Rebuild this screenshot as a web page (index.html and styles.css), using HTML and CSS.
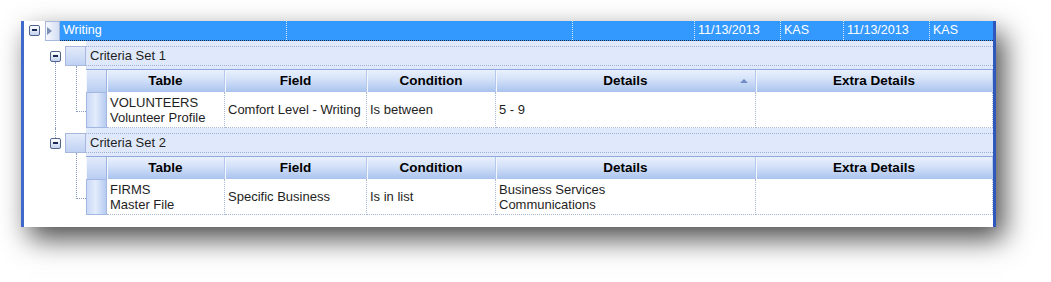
FILE: index.html
```html
<!DOCTYPE html>
<html>
<head>
    <link rel="stylesheet" href="styles.css">
</head>
<body>
    <div class="panel">

        <div class="top-row">
            <div class="tree-cell"><span class="expander"></span></div>
            <div class="row-head current"><span class="arrow"></span></div>
            <div class="top-cells">
                <div class="cell">Writing</div>
                <div class="cell"></div>
                <div class="cell"></div>
                <div class="cell">11/13/2013</div>
                <div class="cell">KAS</div>
                <div class="cell">11/13/2013</div>
                <div class="cell">KAS</div>
            </div>
        </div>

        <div class="group">
            <div class="group-gutter">
                <div class="group-tree">
                    <div class="tree-stub"></div>
                    <span class="expander"></span>
                    <div class="tree-line"></div>
                </div>
                <div class="group-heads">
                    <div class="row-head"></div>
                    <div class="connector"></div>
                </div>
            </div>
            <div class="group-body">
                <div class="group-title">Criteria Set 1</div>
                <div class="grid">
                    <div class="hd rh"></div>
                    <div class="hd">Table</div>
                    <div class="hd">Field</div>
                    <div class="hd">Condition</div>
                    <div class="hd sorted">Details</div>
                    <div class="hd">Extra Details</div>

                    <div class="rh-data"></div>
                    <div class="td">VOLUNTEERS<br>Volunteer Profile</div>
                    <div class="td">Comfort Level - Writing</div>
                    <div class="td">Is between</div>
                    <div class="td">5 - 9</div>
                    <div class="td"></div>
                </div>
            </div>
        </div>

        <div class="group">
            <div class="group-gutter">
                <div class="group-tree">
                    <div class="tree-stub line"></div>
                    <span class="expander"></span>
                </div>
                <div class="group-heads">
                    <div class="row-head"></div>
                    <div class="connector"></div>
                </div>
            </div>
            <div class="group-body">
                <div class="group-title">Criteria Set 2</div>
                <div class="grid">
                    <div class="hd rh"></div>
                    <div class="hd">Table</div>
                    <div class="hd">Field</div>
                    <div class="hd">Condition</div>
                    <div class="hd">Details</div>
                    <div class="hd">Extra Details</div>

                    <div class="rh-data"></div>
                    <div class="td">FIRMS<br>Master File</div>
                    <div class="td">Specific Business</div>
                    <div class="td">Is in list</div>
                    <div class="td">Business Services<br>Communications</div>
                    <div class="td"></div>
                </div>
            </div>
        </div>

    </div>
</body>
</html>
```

FILE: styles.css
```css
* {
    margin: 0;
    padding: 0;
    box-sizing: border-box;
}

html {
    background-color: #fff;
}

body {
    font-family: 'Liberation Sans', Arial, sans-serif;
    font-size: 12.5px;
    color: #1e1e1e;
    background-color: #fff;
    min-height: 282px;
    padding-top: 21px;
}

.panel {
    margin-left: 21px;
    width: 975px;
    height: 206px;
    background-color: #fff;
    border-left: 3px solid #4069c9;
    border-right: 3px solid #2f58bd;
    box-shadow: 8px 12px 26px rgba(0, 0, 0, 0.7);
}

/* top level row */
.top-row {
    display: flex;
    height: 20px;
}

.tree-cell {
    width: 21px;
    padding: 4px 0 0 5px;
}

.expander {
    display: block;
    width: 11px;
    height: 11px;
    border: 1px solid #50648f;
    border-radius: 2px;
    background: linear-gradient(#ffffff, #c4d2ec);
}

.expander::after {
    content: "";
    display: block;
    width: 5px;
    height: 2px;
    margin: 3px auto 0;
    background-color: #1b2a55;
}

.row-head {
    width: 15px;
    background: linear-gradient(to right, #eef3fc, #c9d7f2);
    border: 1px solid #a7b8dc;
}

.row-head.current {
    background: linear-gradient(to right, #f6f8fd, #d3def3);
}

.arrow {
    display: block;
    width: 0;
    height: 0;
    margin: 5px 0 0 1px;
    border-top: 4px solid transparent;
    border-bottom: 4px solid transparent;
    border-left: 5px solid #7d8fb5;
}

.top-cells {
    flex: 1;
    display: grid;
    grid-template-columns: 227px 286px 122px 86px 63px 86px 63px;
    background-color: #3399ff;
    color: #fff;
    border-bottom: 1px dotted #1c2a44;
}

.top-cells .cell {
    padding-left: 3px;
    line-height: 19px;
    border-right: 1px dotted #d4e6ff;
}

.top-cells .cell:last-child {
    border-right: none;
}

/* criteria groups */
.group {
    display: flex;
    height: 87px;
}

.group-gutter {
    width: 62px;
    display: flex;
    padding-left: 22px;
}

.group-tree {
    width: 19px;
    display: flex;
    flex-direction: column;
}

.group-tree .expander {
    margin-left: 4px;
}

.tree-stub {
    height: 10px;
}

.tree-stub.line,
.tree-line {
    margin-left: 9px;
    border-left: 1px dotted #8a9cc4;
}

.tree-line {
    flex: 1;
}

.group-heads {
    width: 21px;
    padding-top: 5px;
}

.group-heads .row-head {
    width: 21px;
    height: 20px;
    background: linear-gradient(#e3ebfb, #bfd1f3);
}

.connector {
    margin-left: 11px;
    width: 10px;
    height: 46px;
    border-left: 1px dotted #8a9cc4;
    border-bottom: 1px dotted #8a9cc4;
}

.group-body {
    flex: 1;
    padding-top: 5px;
    background-color: #dfe9fb;
}

.group-title {
    height: 20px;
    padding-left: 4px;
    line-height: 18px;
    font-size: 13px;
    border-top: 1px dotted #9fb1d4;
    border-bottom: 1px dotted #9fb1d4;
}

.grid {
    margin-top: 3px;
    display: grid;
    grid-template-columns: 21px 118px 142px 129px 260px 237px;
    border-top: 1px solid #8ea8dc;
}

.hd {
    position: relative;
    height: 22px;
    line-height: 22px;
    text-align: center;
    font-size: 13.5px;
    font-weight: bold;
    color: #000;
    background: linear-gradient(#eaf1fd, #d2e0f8 45%, #a9c3ee);
    border-right: 1px solid #b3c8ec;
    box-shadow: inset 1px 0 0 #f4f8fe;
}

.hd.rh {
    background: linear-gradient(#e3ebfb, #b9cdf2);
    border-right: 1px solid #9db4e0;
}

.hd:last-child {
    border-right: none;
}

.sorted::after {
    content: "";
    position: absolute;
    right: 7px;
    top: 9px;
    border-left: 4px solid transparent;
    border-right: 4px solid transparent;
    border-bottom: 4px solid #6f8bc6;
}

.rh-data {
    height: 36px;
    background: linear-gradient(to right, #cad9f6, #e3ecfc 45%, #b6cbf1);
    border: 1px solid #a3b8e0;
}

.td {
    height: 36px;
    display: flex;
    align-items: center;
    padding-left: 3px;
    line-height: 15px;
    font-size: 13px;
    background-color: #fff;
    border-right: 1px dotted #a9b8d6;
    border-bottom: 1px dotted #a9b8d6;
}
```
